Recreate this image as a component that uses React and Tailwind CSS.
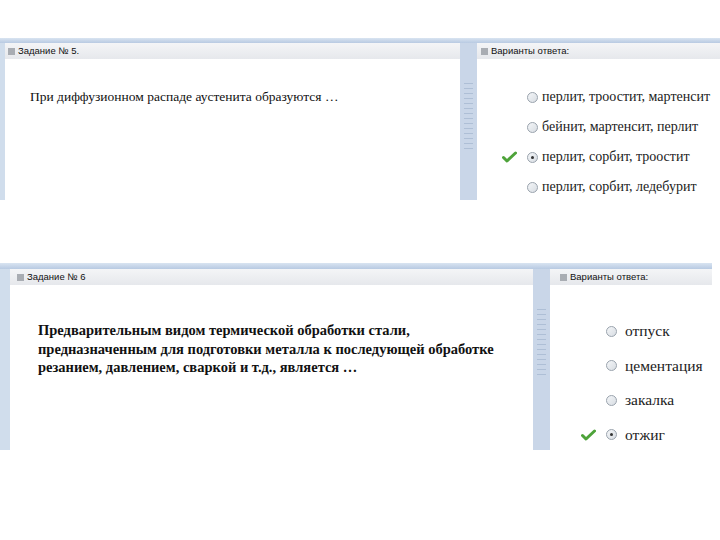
import React from "react";

const serifCls = "font-['Liberation_Serif','Times_New_Roman',serif]";
const sansCls = "font-['Liberation_Sans',Arial,sans-serif]";

function Radio({ checked }) {
  return (
    <span className="relative inline-block w-[11px] h-[11px] rounded-full border border-[#9aa3ad] bg-gradient-to-br from-[#f4f6f8] to-[#d8dde3] shrink-0">
      {checked && (
        <span className="absolute left-[3px] top-[3px] w-[3px] h-[3px] rounded-full bg-[#333]" />
      )}
    </span>
  );
}

function Check() {
  return (
    <svg width="15" height="12" viewBox="0 0 15 12" className="shrink-0">
      <path d="M1.5 6.5 L5 10 L13.5 2" fill="none" stroke="#4ea33a" strokeWidth="3" strokeLinecap="round" strokeLinejoin="round" />
    </svg>
  );
}

function Header({ children, pl }) {
  return (
    <div className={`h-[16px] shrink-0 bg-gradient-to-b from-[#f4f5f7] to-[#e6e8ec] flex items-center ${pl} gap-[3px] text-[9.5px] text-[#111] ${sansCls}`}>
      <span className="w-[7px] h-[7px] bg-[#a9adb3] inline-block" />
      <span>{children}</span>
    </div>
  );
}

function Splitter({ w }) {
  return (
    <div className={`${w} shrink-0 bg-[#c9d6e8] flex flex-col items-center`}>
      <div className="flex flex-col gap-[4px] w-full px-[4px] pt-[40px]">
        {Array.from({ length: 14 }).map((_, i) => (
          <div key={i} className="h-px bg-[#aebfd6]" />
        ))}
      </div>
    </div>
  );
}

function Option({ text, checked, gap, size }) {
  return (
    <div className="flex items-center h-[20px]">
      <div className="w-[25px] flex justify-start">{checked && <Check />}</div>
      <Radio checked={checked} />
      <span className={`${gap} ${size} leading-[20px] text-[#222] ${serifCls}`}>{text}</span>
    </div>
  );
}

export default function App() {
  return (
    <div className="w-[720px] h-[540px] bg-white overflow-hidden">
      {/* top block */}
      <div className="pt-[38px]">
        <div className="h-[162px] flex flex-col w-[720px] overflow-hidden">
          <div className="h-[5px] shrink-0 bg-gradient-to-b from-[#d9e4f1] to-[#b8cae2]" />
          <div className="flex flex-1 min-h-0">
            <div className="w-[5px] shrink-0 bg-[#d0ddec]" />
            <div className="w-[455px] shrink-0 flex flex-col">
              <Header pl="pl-[3px]">Задание № 5.</Header>
              <div className={`pl-[25px] pt-[30px] text-[13.5px] leading-[16px] text-[#111] ${serifCls}`}>
                При диффузионном распаде аустенита образуются …
              </div>
            </div>
            <Splitter w="w-[17px]" />
            <div className="flex-1 flex flex-col">
              <Header pl="pl-[4px]">Варианты ответа:</Header>
              <div className="pl-[25px] pt-[28px] flex flex-col gap-[10px]">
                <Option text="перлит, троостит, мартенсит" gap="ml-[4px]" size="text-[14px]" />
                <Option text="бейнит, мартенсит, перлит" gap="ml-[4px]" size="text-[14px]" />
                <Option text="перлит, сорбит, троостит" checked gap="ml-[4px]" size="text-[14px]" />
                <Option text="перлит, сорбит, ледебурит" gap="ml-[4px]" size="text-[14px]" />
              </div>
            </div>
          </div>
        </div>
      </div>

      {/* bottom block */}
      <div className="pt-[63px]">
        <div className="h-[187px] flex flex-col w-[712px] overflow-hidden">
          <div className="h-[6px] shrink-0 bg-gradient-to-b from-[#d9e4f1] to-[#b8cae2]" />
          <div className="flex flex-1 min-h-0">
            <div className="w-[10px] shrink-0 bg-[#d0ddec]" />
            <div className="w-[523px] shrink-0 flex flex-col">
              <Header pl="pl-[7px]">Задание № 6</Header>
              <div className={`pl-[28px] pt-[36px] text-[14.5px] font-bold leading-[18.5px] text-[#111] ${serifCls}`}>
                Предварительным видом термической обработки стали,<br />
                предназначенным для подготовки металла к последующей обработке<br />
                резанием, давлением, сваркой и т.д., является …
              </div>
            </div>
            <Splitter w="w-[17px]" />
            <div className="flex-1 flex flex-col">
              <Header pl="pl-[10px]">Варианты ответа:</Header>
              <div className="pl-[31px] pt-[36px] flex flex-col gap-[14.5px]">
                <Option text="отпуск" gap="ml-[8px]" size="text-[15.5px]" />
                <Option text="цементация" gap="ml-[8px]" size="text-[15.5px]" />
                <Option text="закалка" gap="ml-[8px]" size="text-[15.5px]" />
                <Option text="отжиг" checked gap="ml-[8px]" size="text-[15.5px]" />
              </div>
            </div>
          </div>
        </div>
      </div>
    </div>
  );
}
